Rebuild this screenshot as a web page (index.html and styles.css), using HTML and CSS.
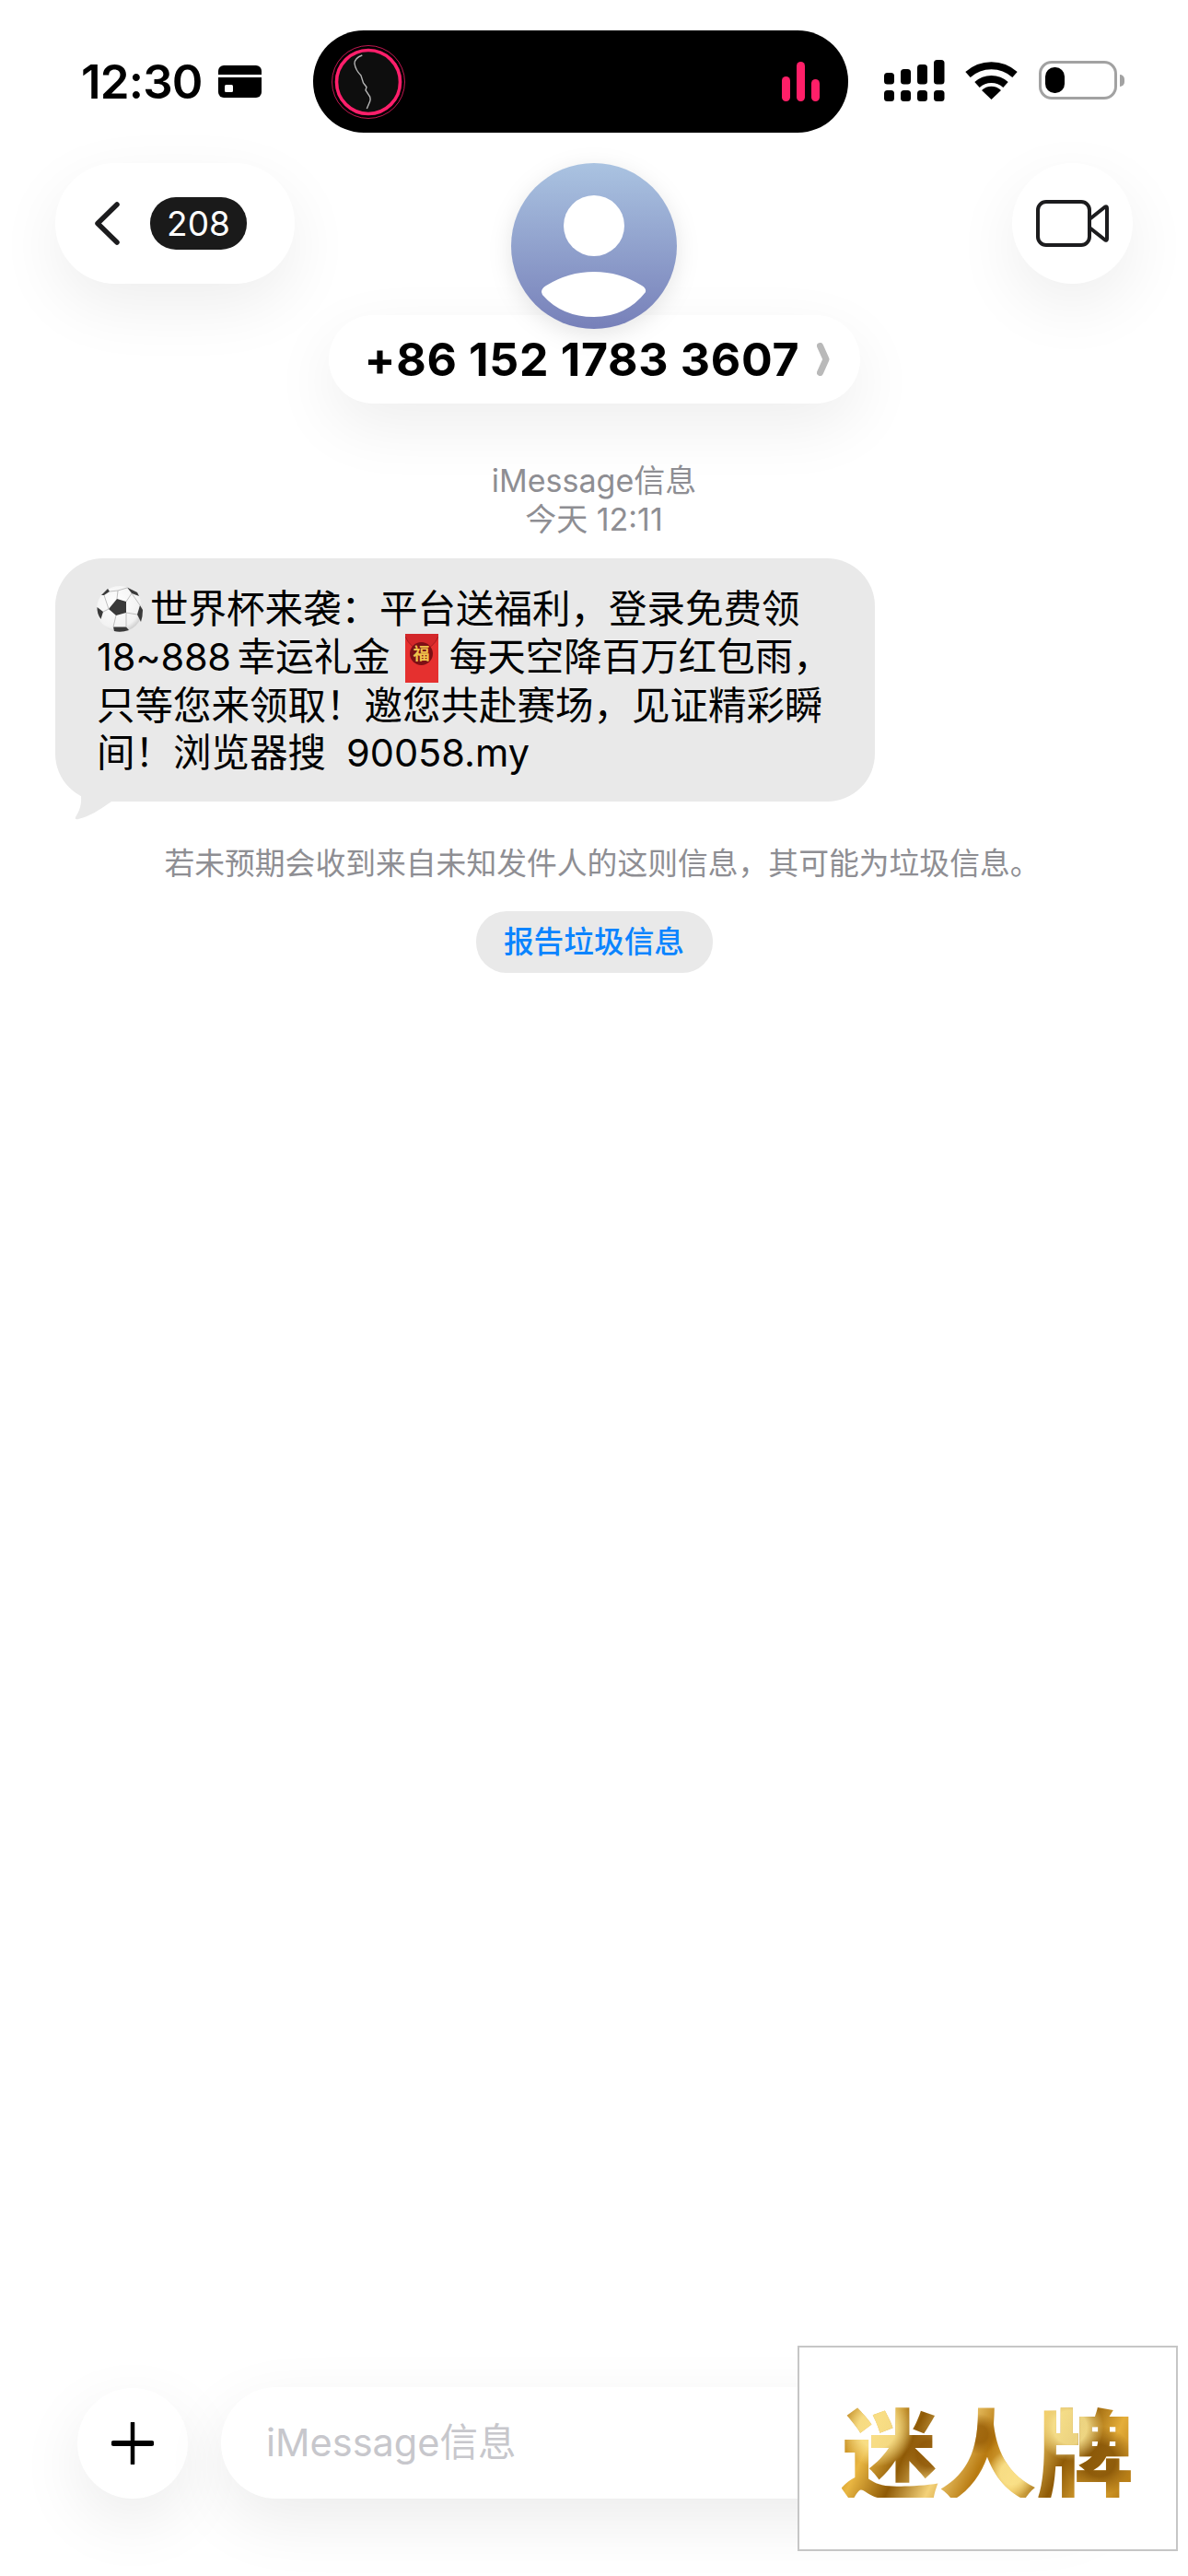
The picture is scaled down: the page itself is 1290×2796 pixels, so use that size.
FILE: index.html
```html
<!DOCTYPE html>
<html lang="zh-CN">
<head>
  <meta charset="UTF-8">
  <meta name="viewport" content="width=device-width, initial-scale=1.0">
  <title>iMessage</title>
  <link rel="stylesheet" href="styles.css">
</head>
<body>
  <div class="phone">

    <div class="status-bar">
      <div class="clock">12:30</div>
      <svg class="card-icon" viewBox="0 0 47 35">
        <path d="M6 0h35a6 6 0 0 1 6 6v23a6 6 0 0 1-6 6H6a6 6 0 0 1-6-6V6a6 6 0 0 1 6-6z" fill="#000"/>
        <rect x="0" y="10" width="47" height="3" fill="#fff"/>
        <rect x="7" y="21" width="9" height="8" rx="1.5" fill="#fff"/>
      </svg>

      <div class="island">
        <svg class="island-cover" viewBox="-42 -42 84 84">
          <circle r="39.5" fill="none" stroke="#ff1f6b" stroke-width="1" opacity="0.75"/>
          <circle r="34.5" fill="#0e0e0e" stroke="#ff1f6b" stroke-width="3.6"/>
          <path d="M-6.7-29Q-15-26-15-20Q-14-13-8-7L-5.5 1L-2 5.5L-3 9L1.7 16Q2.5 19 1.7 21L-1.7 29" fill="none" stroke="#b5b5b5" stroke-width="1.4"/>
        </svg>
        <div class="island-bars">
          <span class="bar bar-mid"></span>
          <span class="bar bar-tall"></span>
          <span class="bar bar-low"></span>
        </div>
      </div>

      <svg class="signal-icon" viewBox="0 0 66 45">
        <rect x="0" y="14" width="11" height="12.500" rx="3.5"/>
        <rect x="18" y="10" width="11" height="16.500" rx="3.500"/>
        <rect x="36" y="5" width="11" height="21.500" rx="3.500"/>
        <rect x="54" y="0" width="11.500" height="26.500" rx="3.500"/>
        <rect x="0" y="33" width="11" height="12" rx="3.500"/>
        <rect x="18" y="33" width="11" height="12" rx="3.500"/>
        <rect x="36" y="33" width="11" height="12" rx="3.500"/>
        <rect x="54" y="33" width="11.500" height="12" rx="3.500"/>
      </svg>

      <svg class="wifi-icon" viewBox="0 0 57 42">
        <path d="M3 15A38 38 0 0 1 54 15" fill="none" stroke="#000" stroke-width="8"/>
        <path d="M13 26A23 23 0 0 1 44 26" fill="none" stroke="#000" stroke-width="8"/>
        <path d="M28.500 42L18 32A15 15 0 0 1 39 32Z" fill="#000"/>
      </svg>

      <div class="battery">
        <div class="battery-body">
          <div class="battery-level"></div>
        </div>
        <div class="battery-nub"></div>
      </div>
    </div>

    <div class="nav">
      <div class="back-pill">
        <svg class="back-chevron" viewBox="0 0 27 47">
          <path d="M24 3L3 23.500L24 44" fill="none" stroke="#1c1c1e" stroke-width="5.500" stroke-linecap="round" stroke-linejoin="round"/>
        </svg>
        <div class="count-badge">208</div>
      </div>

      <div class="contact">
        <svg class="avatar" viewBox="0 0 180 180">
          <defs>
            <linearGradient id="avatarFill" x1="0" y1="0" x2="0" y2="1">
              <stop offset="0" stop-color="#aac3e1"/>
              <stop offset="1" stop-color="#7780b9"/>
            </linearGradient>
          </defs>
          <circle cx="90" cy="90" r="90" fill="url(#avatarFill)"/>
          <circle cx="90" cy="68" r="33" fill="#fff"/>
          <path d="M33 140Q33 136 38 133Q62 118 90 118Q118 118 142 133Q147 136 146 140Q125 167 90 167Q55 167 34 143Z" fill="#fff"/>
        </svg>
        <div class="name-pill">
          <span class="name-text">+86 152 1783 3607</span>
          <svg class="name-chevron" viewBox="0 0 14 36">
            <path d="M3.500 3.500L10 18L3.500 32.500" fill="none" stroke="#b9b9b9" stroke-width="7" stroke-linecap="round" stroke-linejoin="round"/>
          </svg>
        </div>
      </div>

      <div class="video-button">
        <svg class="video-icon" viewBox="0 0 79 51">
          <rect x="2" y="2" width="56" height="47" rx="9" fill="none" stroke="#1c1c1e" stroke-width="4"/>
          <path d="M58 21L75 7.500Q77 6.500 77 9V42Q77 44.500 75 43.500L58 30" fill="none" stroke="#1c1c1e" stroke-width="4" stroke-linejoin="round"/>
        </svg>
      </div>
    </div>

    <div class="thread-meta">
      <div>iMessage信息</div>
      <div>今天 12:11</div>
    </div>

    <div class="bubble">
      <svg class="bubble-tail" viewBox="0 0 44 34">
        <path d="M6 0C8 12 8 20 1 31Q0 34 4 33C16 30 26 24 40 14L40 0Z" fill="#e9e9e9"/>
      </svg>
      <svg class="emoji-ball" viewBox="0 0 50 50">
        <defs>
          <radialGradient id="ballFill" cx="0.42" cy="0.38" r="0.7">
            <stop offset="0" stop-color="#fff"/>
            <stop offset="0.75" stop-color="#f2f2f2"/>
            <stop offset="1" stop-color="#bdbdbd"/>
          </radialGradient>
        </defs>
        <circle cx="25" cy="25" r="25" fill="url(#ballFill)"/>
        <path d="M22 14L32 17L32 29L21 32L13 25Z" fill="#3a3a3a"/>
        <path d="M33 1.500L44 7L46 11L38 8Z" fill="#3a3a3a"/>
        <path d="M5 10L12 3L14 6L8 10Z" fill="#3a3a3a"/>
        <path d="M0.500 23L7 28L4.500 36Q0 30 0.500 23Z" fill="#3a3a3a"/>
        <path d="M47 21L50 26Q50 33 48 39L44 31Z" fill="#3a3a3a"/>
        <path d="M18 44.500H32L35 48Q26 51 19 49Z" fill="#3a3a3a"/>
        <path d="M22 14L23 5M14 6L23 5L33 2M32 17L38 8M32 29L44 31M21 32L18 44.500M13 25L7 28M8 10L13 25M32 29L32 44.500M38 8L47 21" fill="none" stroke="#b0b0b0" stroke-width="0.800"/>
      </svg>世界杯来袭：平台送福利，登录免费领<br>
      <span class="latin-gap">18~888</span>幸运礼金<svg class="emoji-envelope" viewBox="0 0 36 53">
        <rect width="36" height="53" fill="#e5302f"/>
        <path d="M0 0H36V3Q30 16 18 18Q6 16 0 3Z" fill="#d3272a"/>
        <path d="M0 3Q6 16 18 18Q30 16 36 3" fill="none" stroke="#a81b20" stroke-width="1"/>
        <circle cx="17.500" cy="21.500" r="12.500" fill="#7d1015"/>
        <text class="envelope-seal" x="17.500" y="28">福</text>
      </svg>每天空降百万红包雨，<br>
      只等您来领取！邀您共赴赛场，见证精彩瞬<br>
      间！浏览器搜<span class="link-text">90058.my</span>
    </div>

    <div class="spam-notice">若未预期会收到来自未知发件人的这则信息，其可能为垃圾信息。</div>
    <div class="spam-report">报告垃圾信息</div>

    <div class="composer">
      <div class="plus-button">
        <svg class="plus-icon" viewBox="0 0 46 46">
          <path d="M23 1V45" stroke="#000" stroke-width="4.500" stroke-linecap="round"/>
          <path d="M2.500 23H43.500" stroke="#000" stroke-width="6" stroke-linecap="round"/>
        </svg>
      </div>
      <div class="message-input">iMessage信息</div>
    </div>

    <div class="watermark">
      <span class="watermark-text">迷人牌</span>
    </div>
  </div>
</body>
</html>
```

FILE: styles.css
```css
body, html {
  margin: 0;
  padding: 0;
  background-color: #fff;
}

.phone {
  position: relative;
  display: flex;
  flex-direction: column;
  width: 1290px;
  height: 2796px;
  overflow: hidden;
  background-color: #fff;
  font-family: Inter, "Noto Sans CJK SC", sans-serif;
  color: #000;
}

/* status bar */
.status-bar {
  display: flex;
  align-items: center;
  height: 111px;
  padding: 33px 0 0 88px;
}

.clock {
  width: 131px;
  font-size: 51px;
  font-weight: 600;
  letter-spacing: -0.8px;
  line-height: 1;
  white-space: nowrap;
}

.card-icon {
  width: 47px;
  height: 35px;
  margin-left: 18px;
  margin-top: -1px;
}

.island {
  display: flex;
  align-items: center;
  justify-content: space-between;
  box-sizing: border-box;
  width: 581px;
  height: 111px;
  margin-left: 56px;
  padding: 0 31px 0 18px;
  background-color: #000;
  border-radius: 55px;
}

.island-cover {
  width: 84px;
  height: 84px;
}

.island-bars {
  display: flex;
  align-items: flex-end;
  gap: 7px;
  height: 43px;
}

.bar {
  width: 9px;
  background-color: #ff1f68;
  border-radius: 5px;
}

.bar-mid { height: 27px; }
.bar-tall { height: 43px; }
.bar-low { height: 24px; }

.signal-icon {
  width: 66px;
  height: 45px;
  margin-left: 39px;
  margin-top: -2px;
}

.wifi-icon {
  width: 57px;
  height: 42px;
  margin-left: 22px;
  margin-top: -3px;
}

.battery {
  display: flex;
  align-items: center;
  margin-left: 23px;
  margin-top: -3px;
}

.battery-body {
  box-sizing: border-box;
  width: 85px;
  height: 42px;
  padding: 4px 0 0 4px;
  border: 3px solid #a2a2a2;
  border-radius: 14px;
}

.battery-level {
  width: 21px;
  height: 28px;
  background-color: #000;
  border-radius: 10px;
}

.battery-nub {
  width: 5px;
  height: 13px;
  margin-left: 3px;
  background-color: #a2a2a2;
  border-radius: 0 5px 5px 0;
}

/* nav */
.nav {
  display: grid;
  grid-template-columns: 1fr auto 1fr;
  align-items: start;
  margin-top: 33px;
  padding: 0 60px;
}

.back-pill {
  display: flex;
  align-items: center;
  box-sizing: border-box;
  width: 260px;
  height: 131px;
  padding-left: 43px;
  background-color: #fff;
  border-radius: 65px;
  box-shadow: 0 24px 70px rgba(0, 0, 0, 0.07);
}

.back-chevron {
  width: 27px;
  height: 47px;
}

.count-badge {
  width: 105px;
  height: 57px;
  margin-left: 33px;
  background-color: #1a1a1a;
  border-radius: 28px;
  color: #fff;
  font-size: 37px;
  line-height: 57px;
  text-align: center;
}

.contact {
  display: flex;
  flex-direction: column;
  align-items: center;
}

.avatar {
  position: relative;
  z-index: 2;
  width: 180px;
  height: 180px;
  filter: drop-shadow(0 6px 12px rgba(0, 0, 0, 0.1));
}

.name-pill {
  display: flex;
  align-items: center;
  box-sizing: border-box;
  width: 577px;
  height: 96px;
  margin-top: -15px;
  padding-left: 39px;
  background-color: #fff;
  border-radius: 48px;
  box-shadow: 0 24px 70px rgba(0, 0, 0, 0.07);
}

.name-text {
  width: 472px;
  font-size: 50px;
  font-weight: 700;
  letter-spacing: 0.7px;
  white-space: nowrap;
}

.name-chevron {
  width: 14px;
  height: 36px;
  margin-left: 19px;
}

.video-button {
  display: flex;
  align-items: center;
  justify-content: center;
  justify-self: end;
  width: 131px;
  height: 131px;
  background-color: #fff;
  border-radius: 50%;
  box-shadow: 0 24px 70px rgba(0, 0, 0, 0.07);
}

.video-icon {
  width: 79px;
  height: 51px;
}

/* thread */
.thread-meta {
  margin-top: 63px;
  color: #8e8e93;
  font-size: 34px;
  line-height: 42px;
  text-align: center;
}

.bubble {
  position: relative;
  box-sizing: border-box;
  width: 890px;
  height: 264px;
  margin: 21px 0 0 60px;
  padding: 30px 0 0 45px;
  background-color: #e9e9e9;
  border-radius: 52px;
  font-size: 41.5px;
  line-height: 51.700px;
  white-space: nowrap;
}

.bubble-tail {
  position: absolute;
  left: 21px;
  bottom: -20px;
  width: 44px;
  height: 34px;
}

.emoji-ball {
  width: 50px;
  height: 50px;
  margin-right: 8px;
  vertical-align: -10px;
}

.latin-gap {
  margin-right: 7px;
  letter-spacing: -0.2px;
}

.emoji-envelope {
  width: 36px;
  height: 53px;
  margin: 0 12px 0 16px;
  vertical-align: -13px;
}

.envelope-seal {
  fill: #f0c24c;
  font-size: 18px;
  font-weight: 700;
  text-anchor: middle;
}

.link-text {
  margin-left: 22px;
}

.spam-notice {
  margin-top: 45px;
  padding-left: 18px;
  color: #8e8e93;
  font-size: 32.8px;
  line-height: 44px;
  text-align: center;
}

.spam-report {
  align-self: center;
  width: 257px;
  height: 67px;
  margin-top: 30px;
  background-color: #e9e9e9;
  border-radius: 33px;
  color: #0a84ff;
  font-size: 32.7px;
  font-weight: 500;
  line-height: 67px;
  text-align: center;
}

/* composer */
.composer {
  display: flex;
  align-items: center;
  gap: 36px;
  margin-top: auto;
  padding: 0 84px 84px;
}

.plus-button {
  display: flex;
  align-items: center;
  justify-content: center;
  flex: none;
  width: 120px;
  height: 120px;
  background-color: #fff;
  border-radius: 50%;
  box-shadow: 0 24px 70px rgba(0, 0, 0, 0.08);
}

.plus-icon {
  width: 46px;
  height: 46px;
}

.message-input {
  flex: 1;
  box-sizing: border-box;
  height: 121px;
  padding-left: 49px;
  background-color: #fff;
  border-radius: 60px;
  box-shadow: 0 24px 70px rgba(0, 0, 0, 0.08);
  color: #c7c7cc;
  font-size: 41.5px;
  line-height: 121px;
}

.watermark {
  position: absolute;
  left: 866px;
  top: 2546px;
  display: flex;
  align-items: center;
  justify-content: center;
  box-sizing: border-box;
  width: 413px;
  height: 223px;
  background-color: #fff;
  border: 2px solid #c6c6c6;
}

.watermark-text {
  background:
    radial-gradient(circle at 12% 30%, rgba(250, 226, 140, 0.9) 0 7%, transparent 14%),
    radial-gradient(circle at 30% 55%, rgba(140, 84, 4, 0.85) 0 6%, transparent 13%),
    radial-gradient(circle at 47% 35%, rgba(150, 92, 6, 0.8) 0 5%, transparent 12%),
    radial-gradient(circle at 58% 75%, rgba(250, 226, 140, 0.9) 0 6%, transparent 13%),
    radial-gradient(circle at 78% 28%, rgba(252, 232, 150, 0.85) 0 7%, transparent 14%),
    radial-gradient(circle at 88% 62%, rgba(130, 80, 4, 0.85) 0 6%, transparent 13%),
    linear-gradient(115deg, #a86c08 0%, #e9b642 14%, #8f5a06 26%, #f4d27a 38%, #b87a10 50%, #f0c860 62%, #8f5a06 74%, #e5ae3a 86%, #a86c08 100%);
  -webkit-background-clip: text;
  background-clip: text;
  color: transparent;
  font-family: "Noto Sans CJK SC", sans-serif;
  font-size: 106px;
  font-weight: 900;
  line-height: 1;
  white-space: nowrap;
}
```
